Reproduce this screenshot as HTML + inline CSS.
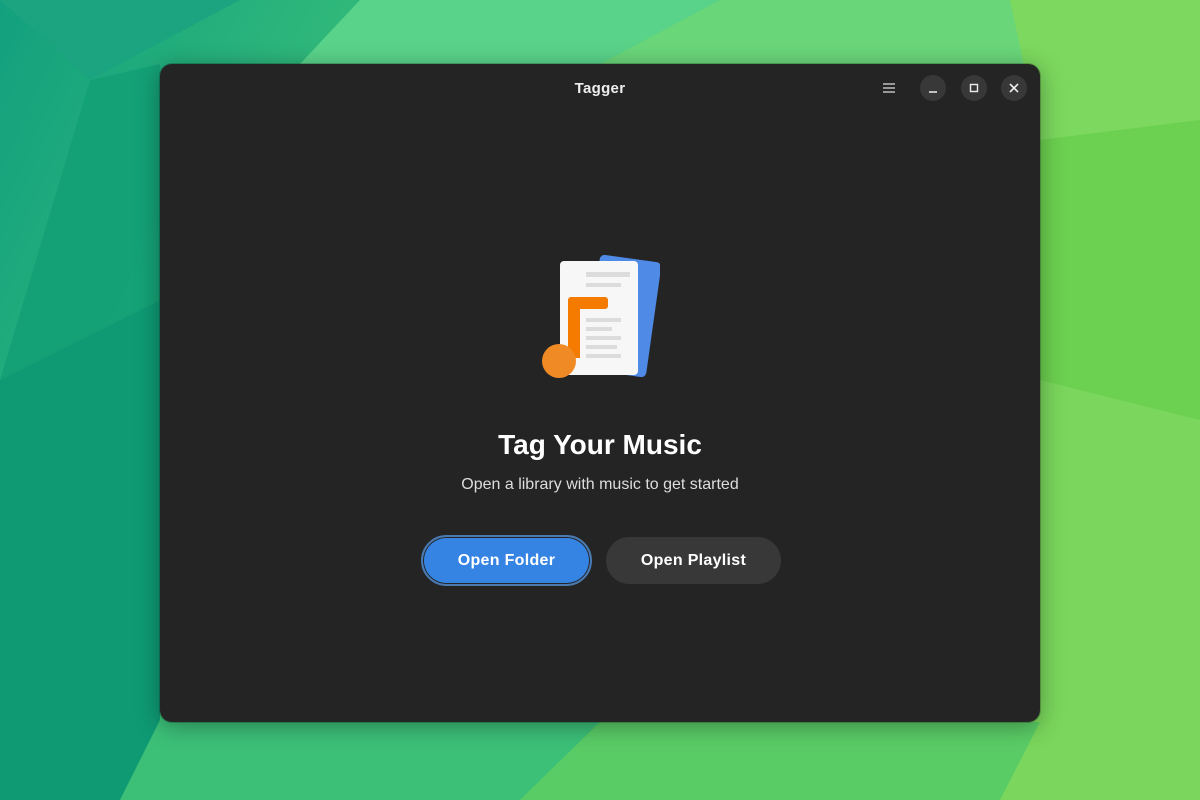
<!DOCTYPE html>
<html><head><meta charset="utf-8"><style>
*{margin:0;padding:0;box-sizing:border-box}
body{width:1200px;height:800px;overflow:hidden;position:relative;font-family:"Liberation Sans",sans-serif;background:#4cc870}
.bg{position:absolute;inset:0}
.win{position:absolute;left:160px;top:64px;width:880px;height:658px;background:#242424;border-radius:12px;box-shadow:0 4px 24px rgba(0,0,0,.35),0 0 0 1px rgba(0,0,0,.2)}
.title{position:absolute;top:16px;width:100%;text-align:center;color:#eee;font-weight:bold;font-size:15px;letter-spacing:.3px}
.cb{position:absolute;top:11px;width:26px;height:26px;border-radius:50%;background:#383838}
.h1{position:absolute;top:365px;width:100%;text-align:center;color:#fff;font-weight:bold;font-size:28px}
.sub{position:absolute;top:412px;width:100%;text-align:center;color:#ddd;font-size:16px}
.btn{position:absolute;top:473px;height:47px;border-radius:24px;color:#fff;font-weight:bold;font-size:16px;text-align:center;line-height:47px;letter-spacing:.3px}
</style></head><body>
<svg class="bg" width="1200" height="800" viewBox="0 0 1200 800">
<defs><linearGradient id="g" x1="0" y1="0" x2="1" y2="0.3"><stop offset="0" stop-color="#12a07e"/><stop offset=".45" stop-color="#44c878"/><stop offset="1" stop-color="#74d24e"/></linearGradient></defs>
<rect width="1200" height="800" fill="url(#g)"/>
<polygon points="0,0 240,0 90,80" fill="#1ba47f"/>
<polygon points="90,80 160,64 160,300 0,380" fill="#13a076" opacity=".9"/>
<polygon points="0,380 160,300 160,720 120,800 0,800" fill="#0f9a74"/>
<polygon points="360,0 720,0 600,64 300,64" fill="#5ad38a"/>
<polygon points="720,0 1010,0 1040,64 600,64" fill="#6ad67a"/>
<polygon points="1010,0 1200,0 1200,120 1040,140" fill="#7cd85e"/>
<polygon points="1040,140 1200,120 1200,420 1040,380" fill="#6cd050"/>
<polygon points="1040,380 1200,420 1200,800 1000,800" fill="#7ad65c"/>
<polygon points="160,722 600,722 520,800 120,800" fill="#3cc078"/>
<polygon points="600,722 1040,722 1000,800 520,800" fill="#5acc66"/>
</svg>
<div class="win">
<div class="title">Tagger</div>
<svg style="position:absolute;left:723px;top:19px" width="12" height="10"><path d="M0 1H12M0 5H12M0 9H12" stroke="#ddd" stroke-width="1.3"/></svg>
<div class="cb" style="left:760px"><svg width="26" height="26"><path d="M9 17H17" stroke="#eee" stroke-width="1.5"/></svg></div>
<div class="cb" style="left:801px"><svg width="26" height="26"><rect x="9.5" y="9.5" width="7" height="7" fill="none" stroke="#eee" stroke-width="1.4"/></svg></div>
<div class="cb" style="left:841px"><svg width="26" height="26"><path d="M9 9L17 17M17 9L9 17" stroke="#eee" stroke-width="1.6"/></svg></div>
<svg style="position:absolute;left:360px;top:176px" width="140" height="140" viewBox="520 240 140 140">
<rect x="592" y="258" width="62" height="116" rx="5" fill="#4f8ae6" transform="rotate(8 623 316)"/>
<rect x="560" y="261" width="78" height="114" rx="4" fill="#f7f7f7"/>
<rect x="586" y="272" width="44" height="5" fill="#dcdcdc"/><rect x="586" y="283" width="35" height="4" fill="#dcdcdc"/>
<rect x="586" y="318" width="35" height="4" fill="#dcdcdc"/><rect x="586" y="327" width="26" height="4" fill="#dcdcdc"/>
<rect x="586" y="336" width="35" height="4" fill="#dcdcdc"/><rect x="586" y="345" width="31" height="4" fill="#dcdcdc"/><rect x="586" y="354" width="35" height="4" fill="#dcdcdc"/>
<path d="M568 300a3 3 0 0 1 3-3H605a3 3 0 0 1 3 3v6a3 3 0 0 1-3 3H580V358H568Z" fill="#f57a00"/>
<circle cx="559" cy="361" r="17" fill="#f08a24"/>
</svg>
<div class="h1">Tag Your Music</div>
<div class="sub">Open a library with music to get started</div>
<div class="btn" style="left:261px;top:471px;width:171px;height:51px;border-radius:26px;border:2px solid #4a7ab0;background:#3584e4;line-height:47px;box-shadow:inset 0 0 0 1px #242424">Open Folder</div>
<div class="btn" style="left:446px;width:175px;background:#383838">Open Playlist</div>
</div>
</body></html>
